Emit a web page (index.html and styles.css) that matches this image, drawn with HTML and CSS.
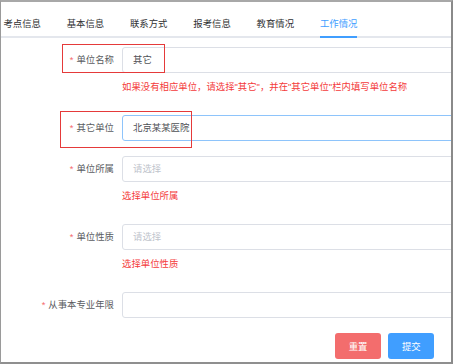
FILE: index.html
```html
<!DOCTYPE html>
<html lang="zh-CN">
<head>
<meta charset="utf-8">
<title>工作情况</title>
<link rel="stylesheet" href="styles.css">
</head>
<body>
<div class="frame">
  <div class="tabs">
    <div class="tab">考点信息</div>
    <div class="tab">基本信息</div>
    <div class="tab">联系方式</div>
    <div class="tab">报考信息</div>
    <div class="tab">教育情况</div>
    <div class="tab active">工作情况</div>
  </div>
  <form class="form">
    <div class="item">
      <label class="label"><span class="req">*</span>单位名称</label>
      <div class="input">其它</div>
    </div>
    <div class="msg">如果没有相应单位，请选择"其它"，并在"其它单位"栏内填写单位名称</div>
    <div class="item">
      <label class="label"><span class="req">*</span>其它单位</label>
      <div class="input focus">北京某某医院</div>
    </div>
    <div class="item">
      <label class="label"><span class="req">*</span>单位所属</label>
      <div class="input placeholder">请选择</div>
    </div>
    <div class="msg">选择单位所属</div>
    <div class="item">
      <label class="label"><span class="req">*</span>单位性质</label>
      <div class="input placeholder">请选择</div>
    </div>
    <div class="msg">选择单位性质</div>
    <div class="item">
      <label class="label"><span class="req">*</span>从事本专业年限</label>
      <div class="input"></div>
    </div>
    <div class="actions">
      <button type="button" class="btn btn-danger">重置</button>
      <button type="button" class="btn btn-primary">提交</button>
    </div>
  </form>
  <span class="mark mark-1"></span>
  <span class="mark mark-2"></span>
</div>
</body>
</html>
```

FILE: styles.css
```css
* { box-sizing: border-box; }
html, body { margin: 0; padding: 0; background: #ffffff; }
body {
  font-family: "Liberation Sans", "Noto Sans CJK SC", sans-serif;
  font-size: 9.4px;
  color: #606266;
}
.frame {
  position: relative;
  width: 453px;
  height: 364px;
  border-left: 1px solid #9a9a9a;
  border-top: 2px solid #a8a8a8;
  border-right: 2px solid #8a8a8a;
  border-bottom: 2px solid #8f8f8f;
  overflow: hidden;
  background: #fff;
}
.tabs {
  display: flex;
  margin-left: -10.5px;
  padding-top: 10px;
  border-bottom: 2px solid #e4e7ed;
}
.tab {
  position: relative;
  padding: 0 12.9px;
  line-height: 24px;
  height: 24px;
  color: #303133;
  white-space: nowrap;
}
.tab.active { color: #409eff; }
.tab.active::after {
  content: "";
  position: absolute;
  left: 12.9px;
  right: 12.9px;
  bottom: -2px;
  height: 2px;
  background: #409eff;
}
.form {
  margin: 9px 0 0 0;
}
.item {
  display: flex;
  height: 26px;
  margin-bottom: 15px;
}
.label {
  flex: 0 0 121px;
  padding-right: 8px;
  text-align: right;
  line-height: 26px;
  color: #5a5c61;
  white-space: nowrap;
}
.req {
  color: #f56c6c;
  margin-right: 3px;
}
.input {
  flex: 0 0 340px;
  height: 26px;
  border: 1px solid #dcdfe6;
  border-radius: 3px;
  padding-left: 10px;
  line-height: 24px;
  color: #4f5156;
  background: #fff;
}
.input.focus { border-color: #8ec4fb; }
.input.placeholder { color: #c0c4cc; }
.msg {
  margin: -15px 0 14px 121px;
  height: 28px;
  line-height: 28px;
  color: #f43b3b;
  white-space: nowrap;
}
.actions {
  display: flex;
  justify-content: flex-end;
  gap: 7.3px;
  padding-right: 16.7px;
}
.btn {
  width: 46px;
  height: 26px;
  border: none;
  border-radius: 3px;
  color: #fff;
  font: inherit;
  font-size: 9.4px;
  padding: 0;
  cursor: pointer;
}
.btn-danger { background: #f36d6d; }
.btn-primary { background: #409eff; }
.mark {
  position: absolute;
  border: 1.5px solid #e53a3a;
  pointer-events: none;
}
.mark-1 { left: 61.3px; top: 42.3px; width: 102.4px; height: 29px; }
.mark-2 { left: 59.3px; top: 109px; width: 131.7px; height: 36.7px; }
```
